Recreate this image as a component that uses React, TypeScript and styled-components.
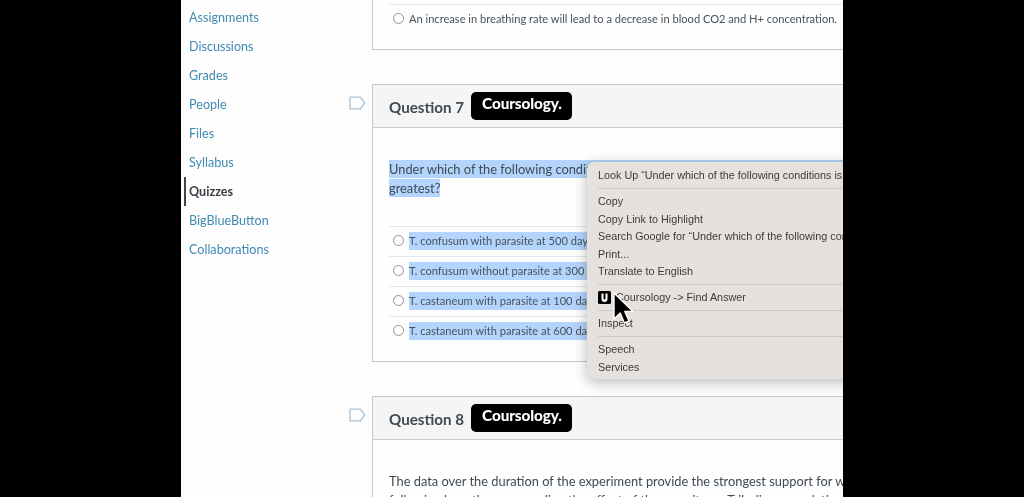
import React from "react";
import styled, { createGlobalStyle } from "styled-components";

const Global = createGlobalStyle`
  html, body { margin: 0; padding: 0; background: #000; height: 497px; overflow: hidden; }
  #root { height: 497px; }
`;

const Stage = styled.div`
  position: relative;
  width: 662px;
  height: 497px;
  margin-left: 181px;
  background: #fefefe;
  overflow: hidden;
  display: flex;
  font-family: Lato, "Noto Sans", sans-serif;
  filter: blur(0.35px);
`;

const Sidebar = styled.nav`
  width: 168px;
  flex: none;
  padding-top: 2.6px;
  display: flex;
  flex-direction: column;
`;

const NavItem = styled.div<{ $active?: boolean }>`
  height: 29.1px;
  line-height: 29px;
  margin-left: 3px;
  padding-left: ${(p) => (p.$active ? "3px" : "5px")};
  border-left: ${(p) => (p.$active ? "2px solid #3c4650" : "none")};
  font-size: 12.6px;
  font-weight: ${(p) => (p.$active ? 700 : 400)};
  color: ${(p) => (p.$active ? "#3a4148" : "#3f8ab3")};
`;

const Column = styled.main`
  flex: none;
  width: 520px;
  display: flex;
  flex-direction: column;
  gap: 34px;
`;

const QuestionRow = styled.section`
  display: flex;
`;

const FlagCell = styled.div`
  width: 23px;
  flex: none;
  padding-top: 10px;
  color: #a9c4d6;
`;

const Card = styled.div<{ $clipped?: boolean }>`
  flex: 1;
  border: 1px solid #c4c8cc;
  border-top: ${(p) => (p.$clipped ? "none" : "1px solid #c4c8cc")};
  background: #fefefe;
`;

const CardHeader = styled.header`
  height: 42px;
  display: flex;
  align-items: center;
  gap: 7px;
  padding-left: 16px;
  background: #f5f5f5;
  border-bottom: 1px solid #c8cbd0;
`;

const Title = styled.h3`
  margin: 2px 0 0;
  font-size: 15.2px;
  font-weight: 700;
  color: #3f4a54;
  white-space: nowrap;
`;

const Badge = styled.span`
  width: 101px;
  height: 28px;
  box-sizing: border-box;
  padding: 0 0 6px 11px;
  display: flex;
  align-items: center;
  background: #000;
  border-radius: 5px;
  color: #fff;
  font-size: 15.3px;
  font-weight: 900;
  letter-spacing: -0.1px;
`;

const Prompt = styled.div`
  padding: 32px 16px 0;
  width: 480px;
  font-size: 12.85px;
  line-height: 19px;
  color: #3f4a54;
  white-space: nowrap;
`;

const Marked = styled.span<{ $tail?: number }>`
  background: #b3d4fc;
  display: inline-block;
  height: 18px;
  line-height: 18px;
  padding-right: ${(p) => p.$tail ?? 0}px;
`;

const Options = styled.div<{ $top: number; $bottom: number }>`
  margin: ${(p) => p.$top}px 16px 0;
  padding-bottom: ${(p) => p.$bottom}px;
  width: 470px;
`;

const Option = styled.div`
  height: 27px;
  padding: 0 0 2px 4px;
  border-top: 1px solid #e4e5e8;
  display: flex;
  align-items: center;
  gap: 5px;
  font-size: 11.1px;
  color: #47525c;
  white-space: nowrap;
`;

const Radio = styled.span`
  width: 9px;
  height: 9px;
  flex: none;
  border: 1px solid #8d9297;
  border-radius: 50%;
  background: #fff;
`;

const OptionMark = styled.span`
  background: #b3d4fc;
  height: 18px;
  line-height: 18px;
`;

const Menu = styled.div`
  position: absolute;
  left: 406px;
  top: 162px;
  width: 320px;
  height: 217px;
  box-sizing: border-box;
  padding: 5px 0 0 11px;
  border-radius: 7px;
  background: #e6e1dd;
  box-shadow: 0 3px 14px rgba(0, 0, 0, 0.28);
  font-family: "Liberation Sans", Arial, sans-serif;
  font-size: 10.8px;
  color: #3c3a39;
`;

const MenuItem = styled.div`
  height: 17.6px;
  line-height: 17.6px;
  display: flex;
  align-items: center;
  gap: 5px;
  white-space: nowrap;
`;

const MenuRule = styled.div<{ $h?: number }>`
  height: ${(p) => p.$h ?? 8.5}px;
  display: flex;
  align-items: center;
  &::after {
    content: "";
    flex: 1;
    height: 1px;
    background: #cfcac6;
  }
`;

const ExtIcon = styled.svg`
  width: 13px;
  height: 13px;
  flex: none;
`;

const Pointer = styled.svg`
  position: absolute;
  left: 431px;
  top: 292px;
  width: 22px;
  height: 33px;
`;

const nav = ["Assignments", "Discussions", "Grades", "People", "Files", "Syllabus", "Quizzes", "BigBlueButton", "Collaborations"];

const Flag = () => (
  <svg width="17" height="14" viewBox="0 0 17 14" fill="none" stroke="currentColor" strokeWidth="1.3">
    <path d="M1 1.2h10.5L15.6 7l-4.1 5.8H1z" strokeLinejoin="round" />
  </svg>
);

export default function App() {
  return (
    <>
      <Global />
      <Stage>
        <Sidebar>
          {nav.map((n) => (
            <NavItem key={n} $active={n === "Quizzes"}>{n}</NavItem>
          ))}
        </Sidebar>
        <Column>
          <QuestionRow>
            <FlagCell />
            <Card $clipped>
              <Options $top={4} $bottom={15}>
                <Option>
                  <Radio />
                  <span>An increase in breathing rate will lead to a decrease in blood CO2 and H+ concentration.</span>
                </Option>
              </Options>
            </Card>
          </QuestionRow>
          <QuestionRow>
            <FlagCell><Flag /></FlagCell>
            <Card>
              <CardHeader>
                <Title>Question 7</Title>
                <Badge>Coursology.</Badge>
              </CardHeader>
              <Prompt>
                <Marked $tail={80}>Under which of the following conditions is the population growth rate</Marked>
                <br />
                <Marked>greatest?</Marked>
              </Prompt>
              <Options $top={28} $bottom={15}>
                {[
                  "T. confusum with parasite at 500 days",
                  "T. confusum without parasite at 300 days",
                  "T. castaneum with parasite at 100 days",
                  "T. castaneum with parasite at 600 days",
                ].map((t) => (
                  <Option key={t}>
                    <Radio />
                    <OptionMark>{t}</OptionMark>
                  </Option>
                ))}
              </Options>
            </Card>
          </QuestionRow>
          <QuestionRow>
            <FlagCell><Flag /></FlagCell>
            <Card>
              <CardHeader>
                <Title>Question 8</Title>
                <Badge>Coursology.</Badge>
              </CardHeader>
              <Prompt>
                The data over the duration of the experiment provide the strongest support for which of the
                <br />
                following hypotheses regarding the effect of the parasite on Tribolium population
              </Prompt>
            </Card>
          </QuestionRow>
        </Column>
        <Menu>
          <MenuItem>Look Up “Under which of the following conditions is the population”</MenuItem>
          <MenuRule />
          <MenuItem>Copy</MenuItem>
          <MenuItem>Copy Link to Highlight</MenuItem>
          <MenuItem>Search Google for “Under which of the following conditions”</MenuItem>
          <MenuItem>Print...</MenuItem>
          <MenuItem>Translate to English</MenuItem>
          <MenuRule $h={7.5} />
          <MenuItem>
            <ExtIcon viewBox="0 0 13 13">
              <rect width="13" height="13" rx="1.5" fill="#000" />
              <path d="M3.5 2.5h2v5a1 1 0 0 0 2 0v-5h2v5.5a3 3 0 0 1-6 0z" fill="#fff" />
            </ExtIcon>
            <span>Coursology -&gt; Find Answer</span>
          </MenuItem>
          <MenuRule />
          <MenuItem>Inspect</MenuItem>
          <MenuRule $h={9} />
          <MenuItem>Speech</MenuItem>
          <MenuItem>Services</MenuItem>
        </Menu>
        <Pointer viewBox="0 0 22 33">
          <path d="M2 1v26l6.2-6 4.2 10 4.6-2-4.2-9.6H21z" fill="#000" stroke="#fff" strokeWidth="1.4" strokeLinejoin="round" />
        </Pointer>
      </Stage>
    </>
  );
}
